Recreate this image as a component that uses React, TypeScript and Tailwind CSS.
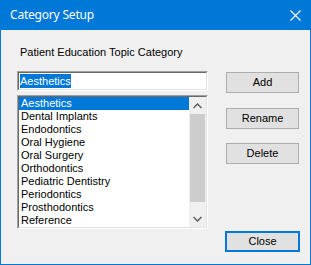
import React from "react";

const items = [
    "Aesthetics",
    "Dental Implants",
    "Endodontics",
    "Oral Hygiene",
    "Oral Surgery",
    "Orthodontics",
    "Pediatric Dentistry",
    "Periodontics",
    "Prosthodontics",
    "Reference",
];

const Button: React.FC<{label: string; focused?: boolean}> = ({label, focused}) => {
    return (
        <div
            className={`flex items-center justify-center bg-[#e1e1e1] text-black ${
                focused ? "w-[75px] h-[21px] border-2 border-[#0078d7] -ml-[1px]" : "w-[73px] h-[21px] border border-[#adadad]"
            }`}
        >
            {label}
        </div>
    );
};

// 3d sunken border used by edit and list boxes
const Sunken: React.FC<{className?: string; children: React.ReactNode}> = ({className, children}) => {
    return (
        <div className={`border-t border-l border-[#a0a0a0] border-b-white border-r-white border-b border-r ${className}`}>
            <div className="h-full w-full border-t border-l border-[#696969] border-b border-r border-b-[#e3e3e3] border-r-[#e3e3e3] bg-white">
                {children}
            </div>
        </div>
    );
};

export default function App() {
    return (
        <div className="w-[311px] h-[265px] flex flex-col bg-[#f0f0f0] border-x border-b border-[#0078d7] font-['Liberation_Sans',Arial,sans-serif] text-[11px] text-black">
            <div className="h-[30px] flex items-center justify-between bg-[#0078d7] text-white -mx-[1px] pl-[10px] pr-[10px]">
                <div className="font-['Noto_Sans',sans-serif] text-[12px] tracking-[-0.2px]">Category Setup</div>
                <svg width="11" height="11" viewBox="0 0 11 11">
                    <path d="M0.5 0.5 L10.5 10.5 M10.5 0.5 L0.5 10.5" stroke="white" strokeWidth="1.1" />
                </svg>
            </div>
            <div className="flex pt-[16px] pl-[16px]">
                <div className="w-[191px] flex flex-col">
                    <div className="ml-[3px] h-[13px] leading-[13px]">Patient Education Topic Category</div>
                    <Sunken className="mt-[12px] h-[20px]">
                        <div className="pl-[1px] pt-[1px] flex">
                            <span className="bg-[#0078d7] text-white leading-[14px] h-[14px]">Aesthetics</span>
                        </div>
                    </Sunken>
                    <Sunken className="mt-[4px] h-[134px]">
                        <div className="flex h-full">
                            <div className="flex-1 flex flex-col">
                                {items.map((it, i) => (
                                    <div
                                        key={i}
                                        className={`h-[13px] leading-[13px] pl-[2px] ${i === 0 ? "bg-[#0078d7] text-white" : ""}`}
                                    >
                                        {it}
                                    </div>
                                ))}
                            </div>
                            <div className="w-[17px] flex flex-col bg-[#f0f0f0]">
                                <div className="h-[17px] flex items-center justify-center">
                                    <svg width="9" height="6" viewBox="0 0 9 6">
                                        <path d="M0.5 5 L4.5 1 L8.5 5" fill="none" stroke="#606060" strokeWidth="1.5" />
                                    </svg>
                                </div>
                                <div className="h-[88px] mx-[1px] bg-[#cdcdcd]" />
                                <div className="flex-1" />
                                <div className="h-[17px] flex items-center justify-center">
                                    <svg width="9" height="6" viewBox="0 0 9 6">
                                        <path d="M0.5 1 L4.5 5 L8.5 1" fill="none" stroke="#606060" strokeWidth="1.5" />
                                    </svg>
                                </div>
                            </div>
                        </div>
                    </Sunken>
                </div>
                <div className="ml-[18px] h-[206px] pt-[26px] flex flex-col">
                    <Button label="Add" />
                    <div className="mt-[15px]">
                        <Button label="Rename" />
                    </div>
                    <div className="mt-[14px]">
                        <Button label="Delete" />
                    </div>
                    <div className="mt-auto">
                        <Button label="Close" focused />
                    </div>
                </div>
            </div>
        </div>
    );
}
